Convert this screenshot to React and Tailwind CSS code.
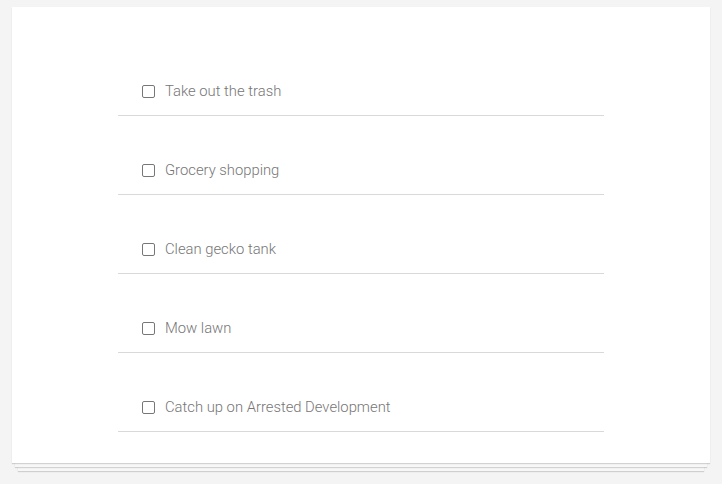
export default function App() {
    const todos = [
        'Take out the trash',
        'Grocery shopping',
        'Clean gecko tank',
        'Mow lawn',
        'Catch up on Arrested Development'
    ];

    return (
        <div className="min-h-screen w-full bg-[#f4f4f4] pt-[7px] px-[12px] pb-[21px] font-['Roboto',sans-serif]">
            {/* stacked paper card */}
            <div className="bg-white px-[106px] pt-[30px] pb-[31px] shadow-[0_1px_1px_rgba(0,0,0,0.15),0_7px_0_-3px_#f7f7f7,0_8px_1px_-3px_rgba(0,0,0,0.15),0_14px_0_-6px_#f7f7f7,0_15px_1px_-6px_rgba(0,0,0,0.15)]">
                <ul>
                    {todos.map(todo => (
                        <li key={todo} className="flex items-center pt-[44px] pb-[14px] pl-[24px] border-b border-[#d9d9d9]">
                            <span className="w-[13px] h-[13px] border border-[#777] rounded-[2px] shrink-0" />
                            <span className="ml-[10px] text-[14.8px] leading-[20px] font-light text-[#767676]">{todo}</span>
                        </li>
                    ))}
                </ul>
            </div>
        </div>
    );
}
